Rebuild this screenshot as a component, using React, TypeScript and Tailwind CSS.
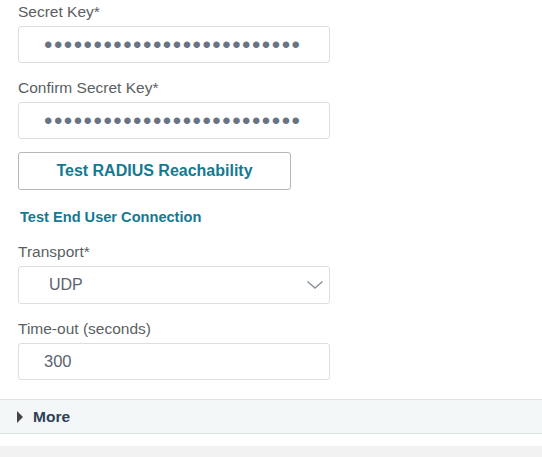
const secret = "abcdefghijklmnopqrstuvwxyz";

const Label = ({ children, className = "" }: { children: React.ReactNode; className?: string }) => (
  <label className={`block text-[15.5px] leading-[18px] text-[#5b5f63] ${className}`}>{children}</label>
);

const App = () => {
  return (
    <div className="min-h-[457px] bg-[#f2f2f2] font-['Liberation_Sans',Arial,sans-serif]">
      <div className="bg-white pt-[3px] pb-[12px]">
        <div className="px-[18px]">
          {/* Secret key */}
          <Label>Secret Key*</Label>
          <input
            type="password"
            readOnly
            value={secret}
            className="mt-[5px] block h-[37px] w-[312px] rounded-[3px] border border-[#dcdfe2] bg-white pl-[25px] text-[24px] tracking-[1.5px] text-[#687384] outline-none"
          />

          <Label className="mt-[16px]">Confirm Secret Key*</Label>
          <input
            type="password"
            readOnly
            value={secret}
            className="mt-[5px] block h-[37px] w-[312px] rounded-[3px] border border-[#dcdfe2] bg-white pl-[25px] text-[24px] tracking-[1.5px] text-[#687384] outline-none"
          />

          <button className="mt-[13px] flex h-[38px] w-[273px] items-center justify-center rounded-[3px] border border-[#b4b6b8] bg-white text-[16px] font-semibold text-[#147a92]">
            Test RADIUS Reachability
          </button>

          <div className="mt-[18px] pl-[2px] text-[14.6px] font-semibold leading-[18px] text-[#147a92]">
            Test End User Connection
          </div>

          {/* Transport */}
          <Label className="mt-[17px]">Transport*</Label>
          <div className="mt-[5px] flex h-[38px] w-[312px] items-center justify-between rounded-[3px] border border-[#dcdfe2] bg-white pl-[30px] pr-[5px]">
            <span className="text-[16px] text-[#5b6470]">UDP</span>
            <svg width="18" height="10" viewBox="0 0 18 10" fill="none" stroke="#8a9099" strokeWidth="1.4">
              <path d="M1.5 1.5 L9 8 L16.5 1.5" />
            </svg>
          </div>

          <Label className="mt-[16px]">Time-out (seconds)</Label>
          <input
            readOnly
            value="300"
            className="mt-[5px] block h-[37px] w-[312px] rounded-[3px] border border-[#dcdfe2] bg-white pl-[25px] text-[16.5px] text-[#5b6470] outline-none"
          />
        </div>

        {/* More section */}
        <div className="mt-[19px] flex h-[35px] items-center border-y border-[#dde2e5] bg-[#f4f7f8] pl-[17px]">
          <svg width="6" height="12" viewBox="0 0 6 12" className="mr-[10px]">
            <path d="M0 0 L6 6 L0 12 Z" fill="#444" />
          </svg>
          <span className="text-[15.5px] font-semibold text-[#2f4156]">More</span>
        </div>
      </div>
    </div>
  );
};

export default App;
